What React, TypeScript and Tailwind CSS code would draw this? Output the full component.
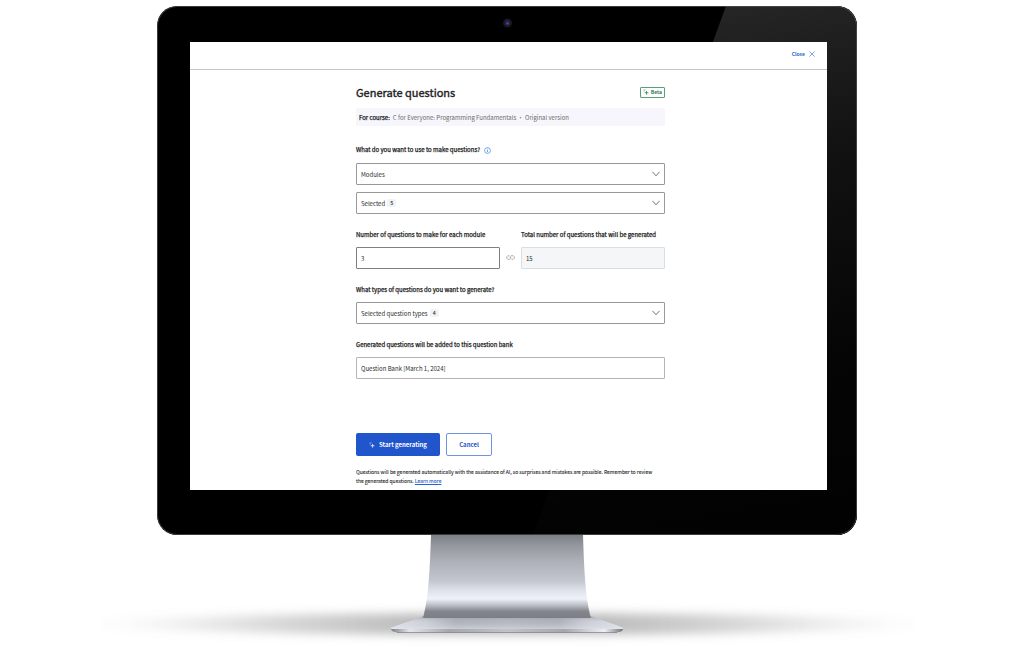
import type { ReactNode } from 'react';

type IconProps = { className?: string };

function SparkleIcon({ className }: IconProps) {
  return (
    <svg viewBox="0 0 16 16" fill="none" stroke="currentColor" className={className} aria-hidden="true">
      <path d="M9.5 5v10M4.5 10h10" strokeWidth="2" />
      <path d="M5 0.5v3M1 5h3M2 2l1.500 1.500" strokeWidth="1.3" />
    </svg>
  );
}

function ChevronIcon({ className }: IconProps) {
  return (
    <svg viewBox="0 0 8 6" fill="none" stroke="currentColor" className={className} aria-hidden="true">
      <path d="M0.4 0.8L4 4.8L7.6 0.8" strokeWidth="0.9" />
    </svg>
  );
}

function InfoIcon({ className }: IconProps) {
  return (
    <svg viewBox="0 0 12 12" fill="none" stroke="currentColor" className={className} aria-hidden="true">
      <circle cx="6" cy="6" r="5" strokeWidth="1.2" />
      <path d="M6 5.4v3.4M6 3v1.2" strokeWidth="1.3" />
    </svg>
  );
}

function LinkIcon({ className }: IconProps) {
  return (
    <svg viewBox="0 0 18 10" fill="none" stroke="currentColor" className={className} aria-hidden="true">
      <path
        d="M7 1.5H3.500L1.500 3.500V6.500L3.500 8.500H8L9.500 7V4.500M11 8.500H14.500L16.500 6.500V3.500L14.500 1.500H10L8.500 3V5.500"
        strokeWidth="1.3"
      />
    </svg>
  );
}

function CloseIcon({ className }: IconProps) {
  return (
    <svg viewBox="0 0 6 6" fill="none" stroke="currentColor" className={className} aria-hidden="true">
      <path d="M0.4 0.4l5.2 5.2M5.6 0.4L0.4 5.6" strokeWidth="0.6" />
    </svg>
  );
}

function Label({ htmlFor, children }: { htmlFor: string; children: ReactNode }) {
  return (
    <label
      htmlFor={htmlFor}
      className="block text-[6px] leading-[8px] font-normal text-[#1f1f1f] [-webkit-text-stroke:0.25px_#1f1f1f]"
    >
      {children}
    </label>
  );
}

type SelectProps = { id: string; value: string; count?: number; label?: string };

function Select({ id, value, count, label }: SelectProps) {
  return (
    <div className="relative">
      <select
        id={id}
        aria-label={label}
        className="block h-[22px] w-full appearance-none rounded-[1px] border border-[#999] bg-white px-1 text-[6px] text-[#2b2b2b]"
      >
        <option>{value}</option>
      </select>
      {count !== undefined && (
        <div className="pointer-events-none absolute inset-y-0 left-[5px] flex items-center gap-[2px] text-[6px] leading-[8px]">
          <span className="invisible" aria-hidden="true">{value}</span>
          <span className="rounded-[2px] bg-[#f0f2f5] px-[3px] text-[5px] font-semibold text-[#4a4a4a]">{count}</span>
        </div>
      )}
      <div className="pointer-events-none absolute inset-y-0 right-[5px] flex items-center">
        <ChevronIcon className="h-[6px] w-[8px] text-[#666]" />
      </div>
    </div>
  );
}

function QuestionForm() {
  return (
    <form className="mx-auto w-full max-w-[309px]" onSubmit={(e) => e.preventDefault()}>
      <div className="flex items-center justify-between">
        <h1 className="text-[11px] leading-[16px] font-normal text-[#1f1f1f] [-webkit-text-stroke:0.4px_#1f1f1f]">
          Generate questions
        </h1>
        <span className="flex h-[11px] items-center gap-[2px] rounded-[1px] border border-[#5f9c7c] px-[2px] text-[5px] font-bold text-[#1d7c50]">
          <SparkleIcon className="size-[6px]" />
          Beta
        </span>
      </div>

      <p className="mt-[8px] flex h-[18px] items-center gap-[3px] bg-[#f6f6fc] px-[3px] text-[6px] text-[#6b6b6b]">
        <strong className="font-normal text-[#1f1f1f] [-webkit-text-stroke:0.25px_#1f1f1f]">For course:</strong>
        <span>C for Everyone: Programming Fundamentals • Original version</span>
      </p>

      <div className="mt-[20px] flex items-center gap-[4px]">
        <Label htmlFor="source">What do you want to use to make questions?</Label>
        <InfoIcon className="size-[7px] text-[#3f7fe0]" />
      </div>
      <div className="mt-[9px] flex flex-col gap-[7px]">
        <Select id="source" value="Modules" />
        <Select id="selected" label="Selected modules" value="Selected" count={5} />
      </div>

      <div className="mt-[17px] flex items-end">
        <div className="min-w-0 flex-1">
          <Label htmlFor="per-module">Number of questions to make for each module</Label>
          <input
            id="per-module"
            type="text"
            defaultValue="3"
            className="mt-[8px] block h-[22px] w-full rounded-[1px] border border-[#808080] px-1 text-[6px] text-[#2b2b2b]"
          />
        </div>
        <div className="flex h-[22px] w-[21px] items-center justify-center pb-[2px]">
          <LinkIcon className="h-[5px] w-[9px] text-[#888]" />
        </div>
        <div className="min-w-0 flex-1">
          <Label htmlFor="total">Total number of questions that will be generated</Label>
          <input
            id="total"
            type="text"
            readOnly
            defaultValue="15"
            className="mt-[8px] block h-[22px] w-full rounded-[1px] border border-[#dadde1] bg-[#f5f6f8] px-1 text-[6px] text-[#2b2b2b]"
          />
        </div>
      </div>

      <div className="mt-[17px]">
        <Label htmlFor="types">What types of questions do you want to generate?</Label>
        <div className="mt-[8px]">
          <Select id="types" value="Selected question types" count={4} />
        </div>
      </div>

      <div className="mt-[17px]">
        <Label htmlFor="bank">Generated questions will be added to this question bank</Label>
        <input
          id="bank"
          type="text"
          defaultValue="Question Bank [March 1, 2024]"
          className="mt-[8px] block h-[22px] w-full rounded-[1px] border border-[#b5b5b5] px-1 text-[6px] text-[#2b2b2b]"
        />
      </div>

      <div className="mt-[54px] flex gap-[6px]">
        <button
          type="submit"
          className="flex h-[23px] w-[84px] items-center justify-center gap-[4px] rounded-[2px] bg-[#2055cc] text-[6px] font-bold text-white"
        >
          <SparkleIcon className="size-[6px]" />
          Start generating
        </button>
        <button
          type="button"
          className="h-[23px] w-[46px] rounded-[2px] border border-[#6f95e0] text-[6px] font-bold text-[#2055cc]"
        >
          Cancel
        </button>
      </div>

      <p className="mt-[11px] pr-[8px] text-[5px] leading-[9px] text-[#2b2b2b] [-webkit-text-stroke:0.1px]">
        Questions will be generated automatically with the assistance of AI, so surprises and mistakes are possible. Remember to review the generated questions.{' '}
        <a href="#learn-more" className="text-[#2a63cf] underline">Learn more</a>
      </p>
    </form>
  );
}

function MonitorStand() {
  return (
    <svg viewBox="90 536 840 112" className="mx-auto block w-[840px] max-w-full" aria-hidden="true">
      <defs>
        <linearGradient id="neck" x1="0" y1="0" x2="0" y2="1">
          <stop offset="0" stopColor="#7c8086" />
          <stop offset="0.12" stopColor="#93969c" />
          <stop offset="0.3" stopColor="#abaeb5" />
          <stop offset="0.55" stopColor="#c3c6ce" />
          <stop offset="0.68" stopColor="#e0e4ed" />
          <stop offset="0.77" stopColor="#eef1fa" />
          <stop offset="0.85" stopColor="#b8bbc2" />
          <stop offset="0.92" stopColor="#83868c" />
          <stop offset="1" stopColor="#7b7e85" />
        </linearGradient>
        <linearGradient id="base" x1="0" y1="0" x2="1" y2="0">
          <stop offset="0" stopColor="#e6e8ee" />
          <stop offset="0.15" stopColor="#cdd0d8" />
          <stop offset="0.28" stopColor="#a9acb4" />
          <stop offset="0.5" stopColor="#b0b3bb" />
          <stop offset="0.72" stopColor="#a9acb4" />
          <stop offset="0.85" stopColor="#cdd0d8" />
          <stop offset="1" stopColor="#e4e7ee" />
        </linearGradient>
        <linearGradient id="sheen" x1="0" y1="0" x2="0" y2="1">
          <stop offset="0" stopColor="#8a8d94" stopOpacity="0.6" />
          <stop offset="0.4" stopColor="#c8cbd2" stopOpacity="0.2" />
          <stop offset="1" stopColor="#e8ebf2" stopOpacity="0.7" />
        </linearGradient>
        <linearGradient id="edge" x1="0" y1="0" x2="1" y2="0">
          <stop offset="0" stopColor="#7b7e84" />
          <stop offset="0.08" stopColor="#e2e5eb" />
          <stop offset="0.25" stopColor="#a4a7ae" />
          <stop offset="0.5" stopColor="#c0c3ca" />
          <stop offset="0.75" stopColor="#a4a7ae" />
          <stop offset="0.92" stopColor="#eef0f5" />
          <stop offset="1" stopColor="#6e7176" />
        </linearGradient>
        <linearGradient id="fade" x1="0" y1="0" x2="1" y2="0">
          <stop offset="0" stopColor="#808080" stopOpacity="0" />
          <stop offset="0.12" stopColor="#808080" stopOpacity="0.15" />
          <stop offset="0.25" stopColor="#808080" stopOpacity="0.35" />
          <stop offset="0.38" stopColor="#808080" stopOpacity="0.52" />
          <stop offset="0.62" stopColor="#808080" stopOpacity="0.52" />
          <stop offset="0.75" stopColor="#808080" stopOpacity="0.35" />
          <stop offset="0.88" stopColor="#808080" stopOpacity="0.15" />
          <stop offset="1" stopColor="#808080" stopOpacity="0" />
        </linearGradient>
        <filter id="soft" x="-10%" y="-150%" width="120%" height="400%">
          <feGaussianBlur stdDeviation="8 5" />
        </filter>
      </defs>
      <ellipse cx="508" cy="625" rx="412" ry="11" fill="url(#fade)" filter="url(#soft)" />
      <path d="M423 617H591C600 621 615 625 623 629V632H391V629C400 625 415 621 423 617Z" fill="url(#base)" />
      <path d="M423 617H591C600 621 615 625 623 629V632H391V629C400 625 415 621 423 617Z" fill="url(#sheen)" />
      <path d="M391 630H623C623 632 620 633.500 614 633.500H400C394 633.500 391 632 391 630Z" fill="url(#edge)" />
      <path d="M397 633.500H617" stroke="#7b7e84" strokeWidth="0.7" />
      <path d="M431 536H583C584 565 585 598 591 619H423C429 598 430 565 431 536Z" fill="url(#neck)" />
    </svg>
  );
}

function App() {
  return (
    <div className="min-h-screen overflow-hidden bg-white pt-[6px] [font-family:'Noto_Sans_CJK_SC','Noto_Sans',sans-serif]">
      <div className="pr-[10px]">
        <div className="relative mx-auto w-full max-w-[700px] overflow-hidden rounded-[20px] bg-black pt-[36px] pr-[30px] pb-[45px] pl-[33px]">
          <svg
            viewBox="0 0 700 530"
            preserveAspectRatio="none"
            className="absolute inset-0 h-full w-full"
            aria-hidden="true"
          >
            <defs>
              <linearGradient id="glare" x1="0.5" y1="0" x2="0.6" y2="1">
                <stop offset="0" stopColor="#262627" />
                <stop offset="0.3" stopColor="#121213" />
                <stop offset="0.7" stopColor="#050506" />
                <stop offset="1" stopColor="#020203" />
              </linearGradient>
            </defs>
            <path d="M569 0H700V530H376Z" fill="url(#glare)" />
            <rect x="0.5" y="0.5" width="699" height="529" rx="20" fill="none" stroke="#555" strokeWidth="0.7" />
            <circle cx="350.500" cy="17" r="4.500" fill="#19191c" />
            <circle cx="350.500" cy="17" r="2.500" fill="#2c2360" />
            <circle cx="350.500" cy="17.500" r="1" fill="#5a4fb0" />
          </svg>
          <div className="relative bg-white pb-[5px]">
            <header className="flex h-[28px] items-center justify-end border-b border-[#c4c4c4] pr-[12px] pb-[3px]">
              <button type="button" className="flex items-center gap-[4px] text-[5px] font-bold text-[#2a63cf]">
                Close
                <CloseIcon className="size-[6px]" />
              </button>
            </header>
            <main className="pt-[14px] pl-[4px]">
              <QuestionForm />
            </main>
          </div>
        </div>
      </div>
      <div className="pr-[4px]">
        <MonitorStand />
      </div>
    </div>
  );
}

export default App;
